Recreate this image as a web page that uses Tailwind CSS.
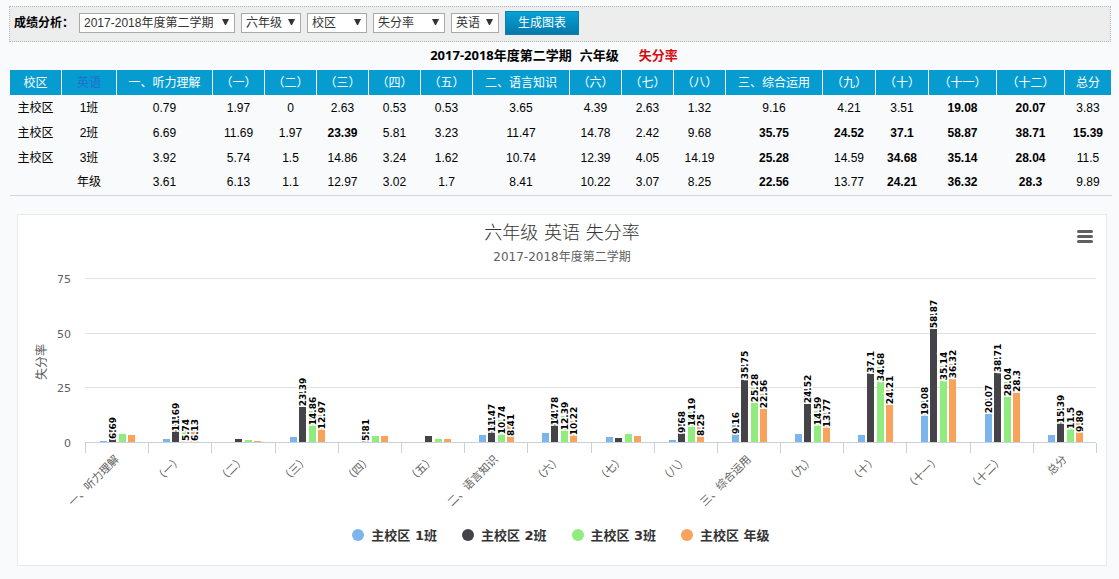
<!DOCTYPE html>
<html lang="zh-CN">
<head>
<meta charset="utf-8">
<meta name="viewport" content="width=device-width, initial-scale=1">
<title>成绩分析</title>
<script src="https://cdn.jsdelivr.net/npm/@tailwindcss/browser@4"></script>
</head>
<body class="bg-[#f9fafc] pt-[6px] pr-2 pl-[9px] pb-3 font-['Liberation_Sans','Noto_Sans_CJK_SC',sans-serif] text-xs text-black">

<form class="flex flex-wrap items-center gap-[6px] border border-dotted border-[#b8b8b8] bg-[#ededed] pl-1 pr-2 pt-1 pb-[6px]" onsubmit="return false">
  <label for="term" class="-mr-px font-bold">成绩分析：</label>
  <div class="relative">
    <select id="term" class="block h-5 w-[156px] appearance-none border border-[#a9a9a9] bg-white pl-1 text-[#333]"><option>2017-2018年度第二学期</option></select>
    <svg class="pointer-events-none absolute right-[6px] top-[6px]" width="7" height="6" viewBox="0 0 7 6"><path d="M0 0H7L4 6H3Z" fill="#333"/></svg>
  </div>
  <div class="relative">
    <select aria-label="年级" class="block h-5 w-[60px] appearance-none border border-[#a9a9a9] bg-white pl-1 text-[#333]"><option>六年级</option></select>
    <svg class="pointer-events-none absolute right-[6px] top-[6px]" width="7" height="6" viewBox="0 0 7 6"><path d="M0 0H7L4 6H3Z" fill="#333"/></svg>
  </div>
  <div class="relative">
    <select aria-label="校区" class="block h-5 w-[60px] appearance-none border border-[#a9a9a9] bg-white pl-1 text-[#333]"><option>校区</option></select>
    <svg class="pointer-events-none absolute right-[6px] top-[6px]" width="7" height="6" viewBox="0 0 7 6"><path d="M0 0H7L4 6H3Z" fill="#333"/></svg>
  </div>
  <div class="relative">
    <select aria-label="指标" class="block h-5 w-[72px] appearance-none border border-[#a9a9a9] bg-white pl-1 text-[#333]"><option>失分率</option></select>
    <svg class="pointer-events-none absolute right-[6px] top-[6px]" width="7" height="6" viewBox="0 0 7 6"><path d="M0 0H7L4 6H3Z" fill="#333"/></svg>
  </div>
  <div class="relative">
    <select aria-label="科目" class="block h-5 w-12 appearance-none border border-[#a9a9a9] bg-white pl-1 text-[#333]"><option>英语</option></select>
    <svg class="pointer-events-none absolute right-[6px] top-[6px]" width="7" height="6" viewBox="0 0 7 6"><path d="M0 0H7L4 6H3Z" fill="#333"/></svg>
  </div>
  <button class="h-6 w-[74px] border border-[#0b7fae] bg-linear-to-b from-[#06a1d8] to-[#0479a8] text-white">生成图表</button>
</form>

<h1 class="flex h-[28px] items-center justify-center pr-3 font-['Noto_Sans','Noto_Sans_CJK_SC',sans-serif] text-[13px] font-bold">
  <span>2017-2018年度第二学期</span><span class="ml-2">六年级</span><span class="ml-5 text-[#d40f14]">失分率</span>
</h1>

<table class="w-full table-fixed border-collapse border-b border-[#d3d5d8] text-center">
  <colgroup>
    <col class="w-[52px]"><col class="w-[55px]"><col class="w-[96px]"><col class="w-[52px]"><col class="w-[52px]"><col class="w-[52px]"><col class="w-[52px]"><col class="w-[52px]"><col class="w-[97px]"><col class="w-[52px]"><col class="w-[52px]"><col class="w-[52px]"><col class="w-[97px]"><col class="w-[53px]"><col class="w-[53px]"><col class="w-[68px]"><col class="w-[68px]"><col class="w-[47px]">
  </colgroup>
  <thead class="bg-[#079cd0] text-white">
    <tr class="h-[25px] *:border-x *:border-white *:p-0 *:font-normal">
      <th>校区</th><th><a href="#" class="text-[#1d6fd0]">英语</a></th><th>一、听力理解</th><th>（一）</th><th>（二）</th><th>（三）</th><th>（四）</th><th>（五）</th><th>二、语言知识</th><th>（六）</th><th>（七）</th><th>（八）</th><th>三、综合运用</th><th>（九）</th><th>（十）</th><th>（十一）</th><th>（十二）</th><th>总分</th>
    </tr>
  </thead>
  <tbody>
    <tr class="h-[25px] *:p-0"><td>主校区</td><td>1班</td><td>0.79</td><td>1.97</td><td>0</td><td>2.63</td><td>0.53</td><td>0.53</td><td>3.65</td><td>4.39</td><td>2.63</td><td>1.32</td><td>9.16</td><td>4.21</td><td>3.51</td><td><b>19.08</b></td><td><b>20.07</b></td><td>3.83</td></tr>
    <tr class="h-[25px] *:p-0"><td>主校区</td><td>2班</td><td>6.69</td><td>11.69</td><td>1.97</td><td><b>23.39</b></td><td>5.81</td><td>3.23</td><td>11.47</td><td>14.78</td><td>2.42</td><td>9.68</td><td><b>35.75</b></td><td><b>24.52</b></td><td><b>37.1</b></td><td><b>58.87</b></td><td><b>38.71</b></td><td><b>15.39</b></td></tr>
    <tr class="h-[25px] *:p-0"><td>主校区</td><td>3班</td><td>3.92</td><td>5.74</td><td>1.5</td><td>14.86</td><td>3.24</td><td>1.62</td><td>10.74</td><td>12.39</td><td>4.05</td><td>14.19</td><td><b>25.28</b></td><td>14.59</td><td><b>34.68</b></td><td><b>35.14</b></td><td><b>28.04</b></td><td>11.5</td></tr>
    <tr class="h-[25px] *:p-0"><td></td><td>年级</td><td>3.61</td><td>6.13</td><td>1.1</td><td>12.97</td><td>3.02</td><td>1.7</td><td>8.41</td><td>10.22</td><td>3.07</td><td>8.25</td><td><b>22.56</b></td><td>13.77</td><td><b>24.21</b></td><td><b>36.32</b></td><td><b>28.3</b></td><td>9.89</td></tr>
  </tbody>
</table>

<section class="relative mt-[18px] ml-2 mr-1 border border-[#e8eaed] bg-white pt-[6px] pb-5 font-['DejaVu_Sans','Noto_Sans_CJK_SC',sans-serif]">
  <h2 class="text-center text-lg leading-6 font-light text-[#333]">六年级 英语 失分率</h2>
  <p class="mt-1 text-center leading-4 text-[#606060]">2017-2018年度第二学期</p>
  <button aria-label="图表菜单" class="absolute right-[9px] top-[11px] p-[2px]">
    <svg width="20" height="18" viewBox="0 0 20 18"><path d="M3.5 3.5H16.5M3.5 8.5H16.5M3.5 13.5H16.5" stroke="#606060" stroke-width="3" stroke-linecap="round"/></svg>
  </button>
  <svg id="plot" class="mt-[5px] block h-auto w-full" viewBox="0 0 1088 250" role="img" aria-label="各题失分率柱状图"></svg>
  <ul class="mt-[6px] flex flex-wrap justify-center gap-[25px] pr-[2px] text-[13px] leading-[19px] font-bold text-[#333]">
    <li class="flex items-center gap-[7px]"><span class="size-3 rounded-full bg-[#7cb5ec]"></span>主校区 1班</li>
    <li class="flex items-center gap-[7px]"><span class="size-3 rounded-full bg-[#434348]"></span>主校区 2班</li>
    <li class="flex items-center gap-[7px]"><span class="size-3 rounded-full bg-[#90ed7d]"></span>主校区 3班</li>
    <li class="flex items-center gap-[7px]"><span class="size-3 rounded-full bg-[#f7a35c]"></span>主校区 年级</li>
  </ul>
</section>

<script>
const names = ['一、听力理解','（一）','（二）','（三）','（四）','（五）','二、语言知识','（六）','（七）','（八）','三、综合运用','（九）','（十）','（十一）','（十二）','总分'];
const series = [
  {color: '#7cb5ec', data: [0.79,1.97,0,2.63,0.53,0.53,3.65,4.39,2.63,1.32,9.16,4.21,3.51,19.08,20.07,3.83]},
  {color: '#434348', data: [6.69,11.69,1.97,23.39,5.81,3.23,11.47,14.78,2.42,9.68,35.75,24.52,37.1,58.87,38.71,15.39]},
  {color: '#90ed7d', data: [3.92,5.74,1.5,14.86,3.24,1.62,10.74,12.39,4.05,14.19,25.28,14.59,34.68,35.14,28.04,11.5]},
  {color: '#f7a35c', data: [3.61,6.13,1.1,12.97,3.02,1.7,8.41,10.22,3.07,8.25,22.56,13.77,24.21,36.32,28.3,9.89]}
];
const left = 67, right = 1078, base = 173, unit = 164 / 75, step = (right - left) / names.length;
const offsets = [15, 24, 34, 43];
let out = '', axis = '';
for (const v of [75, 50, 25, 0]) {
  const y = Math.round(base - v * unit);
  const line = `<path d="M${left} ${y - .5}H${right}" stroke="${v ? '#e0e0e0' : '#c8d0dc'}"/>`;
  if (v) out += line; else axis = line;
  out += `<text x="53" y="${y + 4}" text-anchor="end" font-size="11" fill="#606060">${v}</text>`;
}
out += '<text transform="translate(28 92) rotate(-90)" text-anchor="middle" font-size="12" fill="#606060">失分率</text>';
for (let i = 0; i <= names.length; i++) {
  out += `<path d="M${Math.round(left + i * step) + .5} ${base}v10" stroke="#c8d0dc"/>`;
}
names.forEach((name, i) => {
  const x = left + (i + .5) * step;
  out += `<text transform="translate(${x + 3} 190) rotate(-45)" text-anchor="end" font-size="11" fill="#606060">${name}</text>`;
});
let labels = '';
series.forEach((s, k) => s.data.forEach((v, i) => {
  const x = Math.round(left + i * step + offsets[k]), h = Math.round(v * unit);
  out += `<rect x="${x}" y="${base - h}" width="7" height="${h}" fill="${s.color}"/>`;
  if (v > 5) {
    const y = Math.min(base - h, base - 12);
    labels += `<text transform="translate(${x + 7} ${y}) rotate(-90)" text-anchor="middle" font-size="9" font-weight="bold" fill="#000" stroke="#fff" stroke-width="3" paint-order="stroke">${v}</text>`;
  }
}));
document.getElementById('plot').innerHTML = out + axis + labels;
</script>
</body>
</html>
